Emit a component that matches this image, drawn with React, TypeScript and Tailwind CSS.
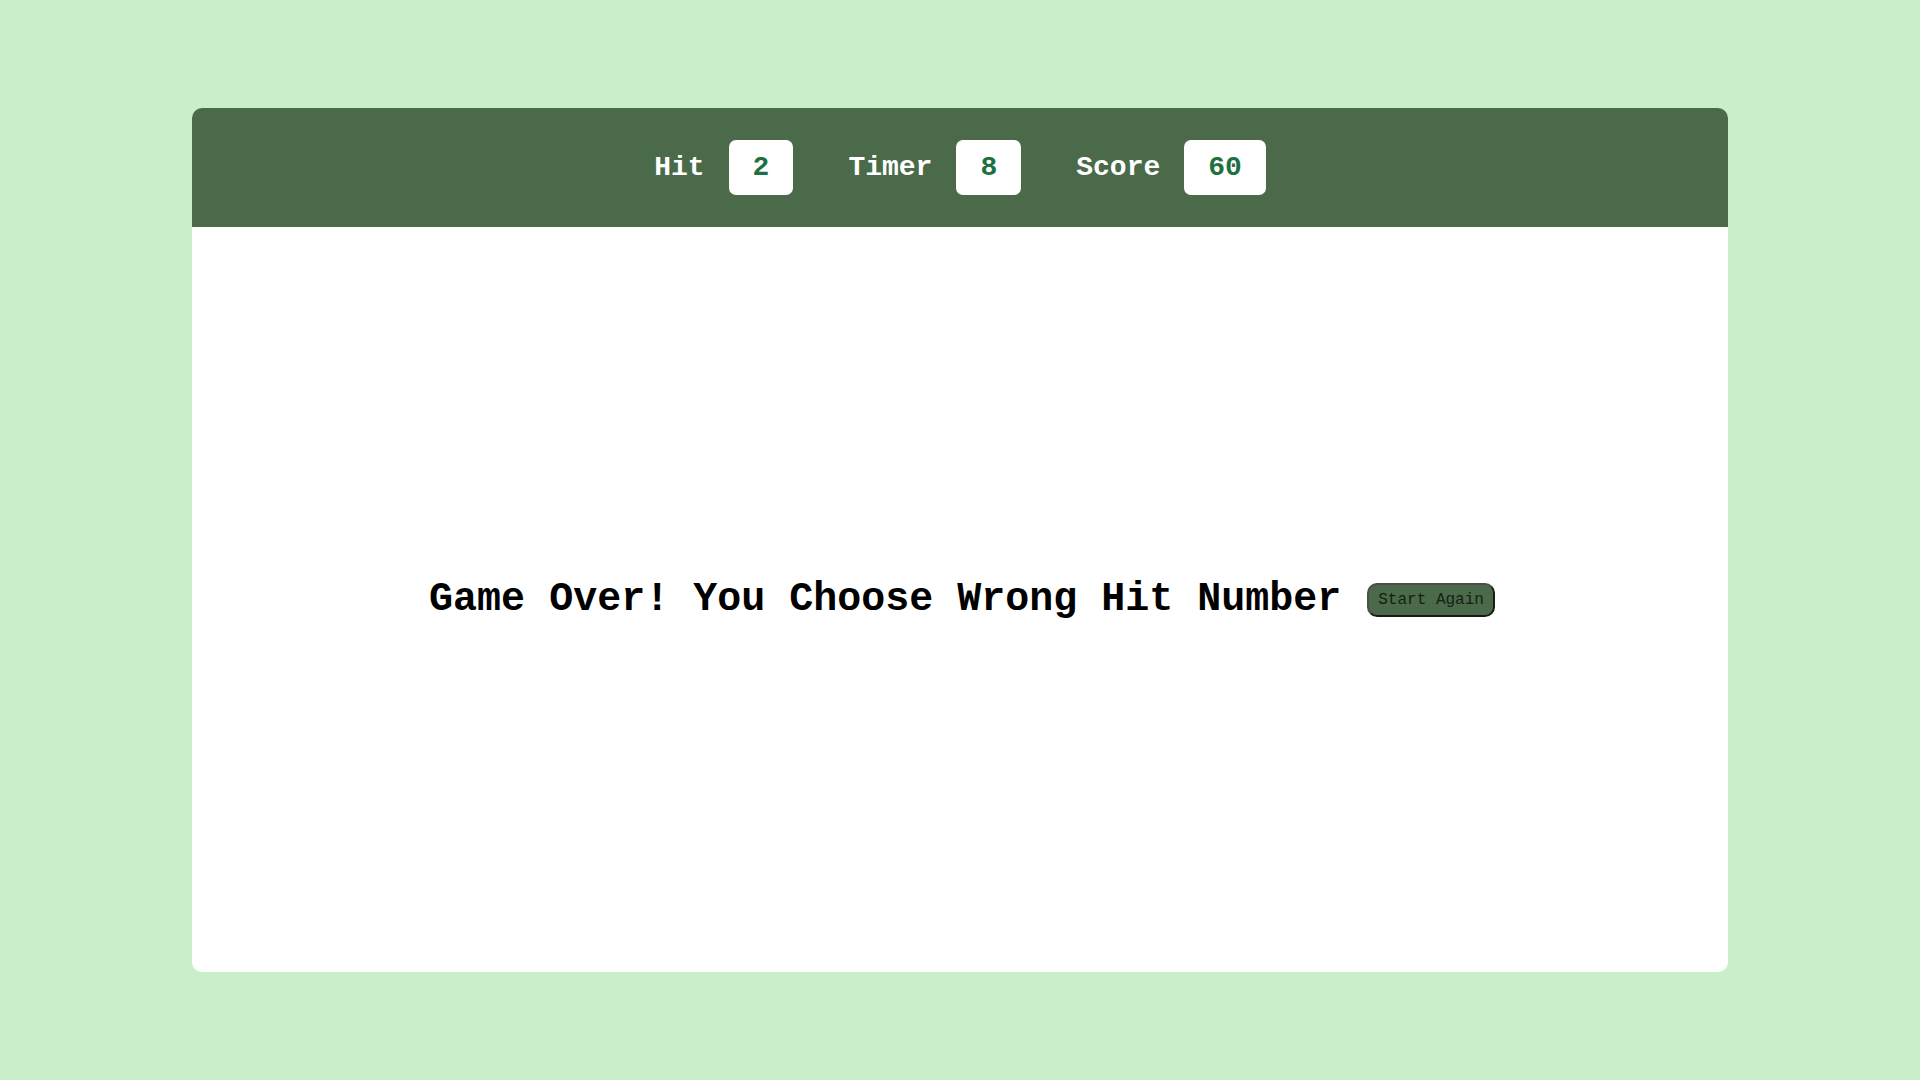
export default function App() {
    const stats = [
        { label: "Hit", value: "2" },
        { label: "Timer", value: "8" },
        { label: "Score", value: "60" },
    ];

    return (
        <div className="w-[1920px] h-[1080px] bg-[#caedca] flex items-center justify-center font-['Liberation_Mono',monospace]">
            <div className="w-[1536px] h-[864px] bg-white rounded-[10px] flex flex-col overflow-hidden">
                <div className="h-[119px] bg-[#4a6a4a] flex items-center justify-center gap-[55px]">
                    {stats.map((s) => (
                        <div key={s.label} className="flex items-center gap-[24px]">
                            <span className="text-white font-bold text-[28px]">{s.label}</span>
                            <div className="bg-white rounded-[7px] h-[55px] px-[24px] flex items-center text-[28px] font-bold text-[#1e7040]">
                                {s.value}
                            </div>
                        </div>
                    ))}
                </div>
                <div className="flex-1 flex items-center justify-center gap-[26px] pl-[4px]">
                    <h1 className="text-[40px] font-bold text-black leading-none">
                        Game Over! You Choose Wrong Hit Number
                    </h1>
                    <button className="bg-[#4a6a4a] text-[#142014] text-[16px] px-[9px] py-[6px] rounded-[10px] border-2 border-[#1a1a1a] border-t-[#4d4d4d] border-l-[#4d4d4d] leading-[18px] font-['Liberation_Mono',monospace]">
                        Start Again
                    </button>
                </div>
            </div>
        </div>
    );
}
